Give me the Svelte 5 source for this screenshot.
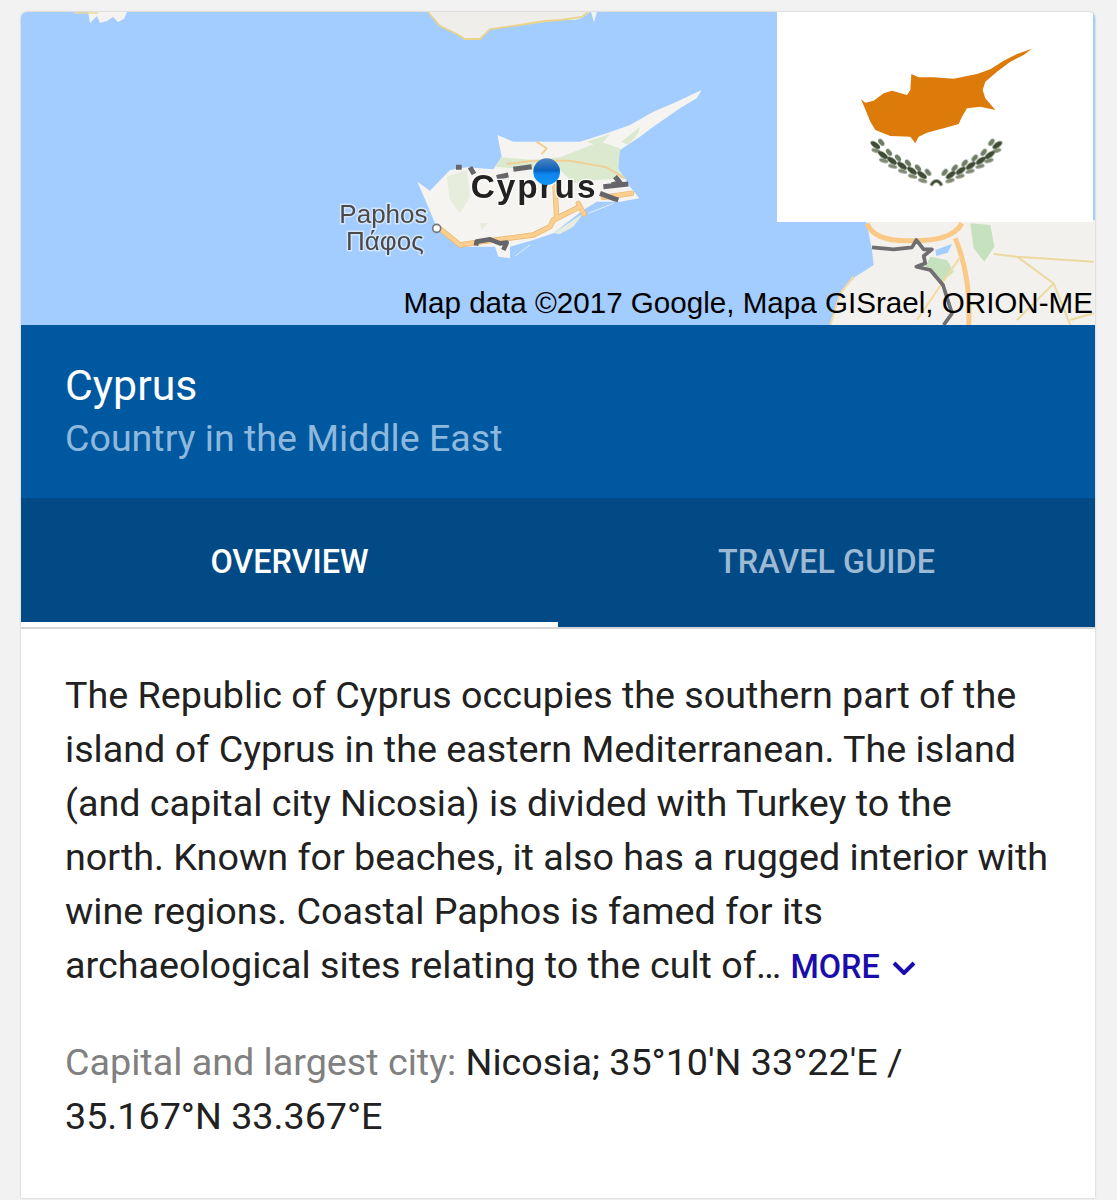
<script>
  // hojas de la corona: de fuera hacia el centro (el lado derecho es el espejo)
  const leaves = [[295, 435], [318, 465], [345, 482], [375, 497], [405, 512], [435, 525]];
  const roads = "M362 478 L420 525 L465 518 L640 495 L690 470 L700 450 L780 410 L792 432 M775 400 L780 410 M705 350 L710 445 M850 382 L935 370";
</script>

<div class="page">
  <div class="card">
    <div class="map">
      <svg class="map-art" viewBox="0 0 3222 939" aria-hidden="true">
        <rect width="3222" height="939" fill="#a3ccff" />
        <!-- costa de Turquia -->
        <g transform="scale(3) translate(-21 -12)">
          <path d="M88 12 L127 12 L124 19 L118 22 L113 17 L107 21 L100 23 L97 16 L90 23 Z" fill="#f4f3f0" />
          <path d="M74 13 H98" stroke="#edd98e" stroke-width="1.4" />
          <path d="M428 12 L440 25 L455 33 L465 40 L480 40 L490 29 L520 25 L545 22 L560 20 L575 20 L582 18 L590 12 Z" fill="#efeeeb" />
          <path d="M428 12 L440 26 L455 33 L465 39 L480 39 L490 29 L520 25 L545 21 L560 20 L582 17 L588 12" fill="none" stroke="#e9d48a" stroke-width="1.8" />
          <path d="M591 12 L597 12 L594 22 Z" fill="#f4f3f0" />
        </g>
        <!-- Israel y Libano -->
        <g transform="translate(2268 -36)">
          <path d="M267 660 L285 750 L290 795 L235 830 L190 880 L160 975 L960 975 V660 Z" fill="#f2f1ed" />
          <path d="M580 670 L640 675 L652 740 L622 785 L590 745 Z M460 770 L510 780 L530 815 L490 850 L445 800 Z" fill="#c6e1bd" />
          <path d="M475 750 L525 732 L512 758 L478 768 Z" fill="#a3ccff" />
          <path d="M270 670 C285 710 340 725 410 722 C470 722 530 715 555 670 M535 715 C570 800 580 880 575 975" fill="none" stroke="#fbc987" stroke-width="15" />
          <path d="M650 762 L720 770 L950 785 M720 770 L830 850 L880 975 M830 850 L720 960 M880 960 L950 940" fill="none" stroke="#ebd9a0" stroke-width="6" />
          <path d="M230 830 L190 880 L160 975 M550 770 L420 960" fill="none" stroke="#f3dc9f" stroke-width="6" />
          <path d="M285 742 L350 748 L405 742 L418 720 L440 748 L465 748 L440 768 L445 790 L418 800 L460 810 L498 855 L525 940 L500 975" fill="none" stroke="#6f6f72" stroke-width="11" stroke-linejoin="round" />
        </g>
        <!-- Chipre -->
        <g transform="translate(897 174)">
          <path d="M292 335 L330 362 L390 300 L440 292 L520 298 L545 260 L532 195 L580 215 L650 215 L780 215 L860 190 L930 165 L1000 125 L1060 100 L1145 60 L1130 85 L1080 115 L1000 170 L960 200 L900 240 L890 290 L915 325 L930 350 L958 385 L900 395 L830 395 L790 420 L700 490 L640 510 L570 530 L570 565 L535 560 L525 530 L430 530 L370 490 L345 460 L320 400 Z" fill="#f5f4f1" />
          <path d="M525 290 L545 262 L640 270 L720 262 L790 235 L840 215 L900 235 L895 300 L915 325 L830 330 L760 340 L720 300 L640 300 Z" fill="#dbe9cf" />
          <path d="M800 215 L870 192 L850 215 L820 222 Z M905 215 L960 170 L955 190 L925 225 Z" fill="#dbe9cf" />
          <path d="M380 320 L440 300 L450 380 L420 430 L390 390 Z M700 490 L790 430 L760 470 L720 492 Z M480 460 L505 458 L485 480 Z" fill="#e6eddd" />
          <path d="M560 282 L640 272 L750 272 L860 292 L915 325 M650 215 L680 235 L665 252" fill="none" stroke="#f0cf94" stroke-width="6" />
          <path d={roads} fill="none" stroke="#e8b56f" stroke-width="16" stroke-linejoin="round" stroke-linecap="round" />
          <path d={roads} fill="none" stroke="#fbcf8f" stroke-width="12" stroke-linejoin="round" stroke-linecap="round" />
          <path d="M408 292 L425 292 M450 292 L462 312 M530 322 L565 315 M580 298 L635 290 M850 350 L925 342 M885 320 L900 338 L875 345 M840 370 L880 385 L895 390" fill="none" stroke="#66666a" stroke-width="15" stroke-linejoin="round" />
          <path d="M468 527 L470 515 L510 508 L540 520 L560 518 L550 540" fill="none" stroke="#66666a" stroke-width="14" stroke-linejoin="round" />
          <path d="M805 430 L880 400 M585 558 L630 525" stroke="#e6f0fb" stroke-width="3" />
          <circle cx="350" cy="475" r="12" fill="#fff" stroke="#777" stroke-width="5" />
          <g class="label-small">
            <text x="58" y="460">Paphos</text>
            <text x="78" y="540">Πάφος</text>
          </g>
          <text class="label-big" x="452" y="385">Cyprus</text>
          <defs>
            <linearGradient id="pin" x1="0" y1="0" x2="0" y2="1">
              <stop offset="0" stop-color="#4d86c4" />
              <stop offset="0.45" stop-color="#0a5fbb" />
              <stop offset="0.58" stop-color="#0d84ee" />
              <stop offset="1" stop-color="#1296f5" />
            </linearGradient>
          </defs>
          <circle cx="680" cy="305" r="40" fill="url(#pin)" />
        </g>
      </svg>
      <div class="flag">
        <svg viewBox="0 36 948 630" aria-hidden="true">
          <path d="M252 298 L265 308 L290 302 L320 280 L345 272 L390 285 L400 270 L403 222 L425 232 L470 232 L530 236 L600 222 L640 208 L680 182 L720 162 L765 146 L740 165 L700 185 L660 215 L625 245 L617 270 L625 295 L655 330 L610 320 L570 325 L555 350 L545 372 L500 385 L450 398 L425 410 L415 430 L400 410 L340 408 L295 390 L280 365 L268 335 Z" fill="#dc7a0a" />
          <g class="wreath">
            {#each leaves as [x, y]}
              <ellipse cx={x} cy={y} rx="17" ry="8" fill="#3f4c35" transform="rotate(35 {x} {y})" />
              <ellipse cx={x + 18} cy={y - 8} rx="12" ry="7" fill="#6f7c64" transform="rotate(50 {x + 18} {y - 8})" />
              <ellipse cx={x + 2} cy={y + 17} rx="14" ry="6" fill="#7f8a74" transform="rotate(15 {x + 2} {y + 17})" />
              <ellipse cx={956 - x} cy={y} rx="17" ry="8" fill="#3f4c35" transform="rotate(-35 {956 - x} {y})" />
              <ellipse cx={938 - x} cy={y - 8} rx="12" ry="7" fill="#6f7c64" transform="rotate(-50 {938 - x} {y - 8})" />
              <ellipse cx={954 - x} cy={y + 17} rx="14" ry="6" fill="#7f8a74" transform="rotate(-15 {954 - x} {y + 17})" />
            {/each}
            <path d="M462 556 Q478 530 494 556" fill="none" stroke="#3f4c35" stroke-width="9" />
          </g>
        </svg>
      </div>
      <div class="credit">Map data ©2017 Google, Mapa GISrael, ORION-ME</div>
    </div>

    <header class="title-block">
      <h1>Cyprus</h1>
      <p>Country in the Middle East</p>
    </header>

    <nav class="tabs">
      <div class="tab active">OVERVIEW</div>
      <div class="tab">TRAVEL GUIDE</div>
    </nav>

    <section class="content">
      <p class="desc">
        The Republic of Cyprus occupies the southern part of the island of Cyprus in the eastern Mediterranean. The island (and capital city Nicosia) is divided with Turkey to the north. Known for beaches, it also has a rugged interior with wine regions. Coastal Paphos is famed for its archaeological sites relating to the cult of…
        <span class="more">MORE<svg viewBox="0 0 24 14" aria-hidden="true"><path d="M2 2 L12 12 L22 2" fill="none" stroke="currentColor" stroke-width="4" /></svg></span>
      </p>
      <p class="fact"><span>Capital and largest city:</span> Nicosia; 35°10'N 33°22'E / 35.167°N 33.367°E</p>
    </section>
  </div>
</div>

<style>
  :global(body) {
    margin: 0;
    background: #f2f2f2;
    font-family: Roboto, "Liberation Sans", sans-serif;
  }

  .page {
    height: 1200px;
    padding: 12px 22px 0 21px;
    box-sizing: border-box;
    overflow: hidden;
  }

  .card {
    background: #fff;
    border-radius: 6px 6px 0 0;
    box-shadow: 0 0 2px rgba(0, 0, 0, 0.25);
    overflow: hidden;
    height: 1186px;
  }

  /* mapa */
  .map {
    position: relative;
    height: 313px;
    overflow: hidden;
  }

  .map-art {
    display: block;
    width: 1074px;
    height: 313px;
    filter: blur(0.4px);
  }

  .label-small {
    font-family: "Liberation Sans", sans-serif;
    font-size: 78px;
    fill: #4a4a4a;
    stroke: #d3e5fb;
    stroke-width: 9px;
    paint-order: stroke;
  }

  .label-big {
    font-family: "Liberation Sans", sans-serif;
    font-size: 100px;
    font-weight: bold;
    letter-spacing: 6px;
    fill: #222;
    stroke: rgba(255, 255, 255, 0.8);
    stroke-width: 8px;
    paint-order: stroke;
  }

  .flag {
    position: absolute;
    top: 0;
    left: 756px;
    width: 316px;
    height: 210px;
    background: #fff;
  }

  .flag svg {
    display: block;
    width: 100%;
    height: 100%;
  }

  .wreath {
    filter: blur(1.5px);
  }

  .credit {
    position: absolute;
    right: 2px;
    bottom: 6px;
    font-family: "Liberation Sans", sans-serif;
    font-size: 29.6px;
    line-height: 32px;
    color: #000;
    white-space: nowrap;
  }

  /* cabecera */
  .title-block {
    background: #0058a0;
    height: 173px;
    padding: 36px 44px 0;
    box-sizing: border-box;
  }

  h1 {
    margin: 0;
    font-size: 42.8px;
    font-weight: 400;
    line-height: 48px;
    color: #fff;
  }

  .title-block p {
    margin: 5px 0 0;
    font-size: 37.6px;
    line-height: 48px;
    color: #8fb9dc;
  }

  /* pestañas */
  .tabs {
    display: grid;
    grid-template-columns: 537px 1fr;
    height: 129px;
    background: #024a85;
  }

  .tab {
    display: flex;
    align-items: center;
    justify-content: center;
    padding-bottom: 2px;
    font-size: 32.4px;
    font-weight: 500;
    color: #9db9d3;
  }

  .tab.active {
    color: #fff;
    box-shadow: inset 0 -5px #fff;
  }

  /* contenido */
  .content {
    border-top: 2px solid #d6d6d6;
    padding: 39px 44px 0;
    font-size: 37.7px;
    line-height: 54px;
    color: #212121;
  }

  .desc {
    margin: 0;
  }

  .more {
    font-size: 32.4px;
    font-weight: 500;
    color: #1a0dab;
    white-space: nowrap;
  }

  .more svg {
    width: 24px;
    height: 14px;
    margin-left: 12px;
    vertical-align: 3px;
  }

  .fact {
    margin: 41px 0 0;
  }

  .fact span {
    color: #808080;
  }
</style>
